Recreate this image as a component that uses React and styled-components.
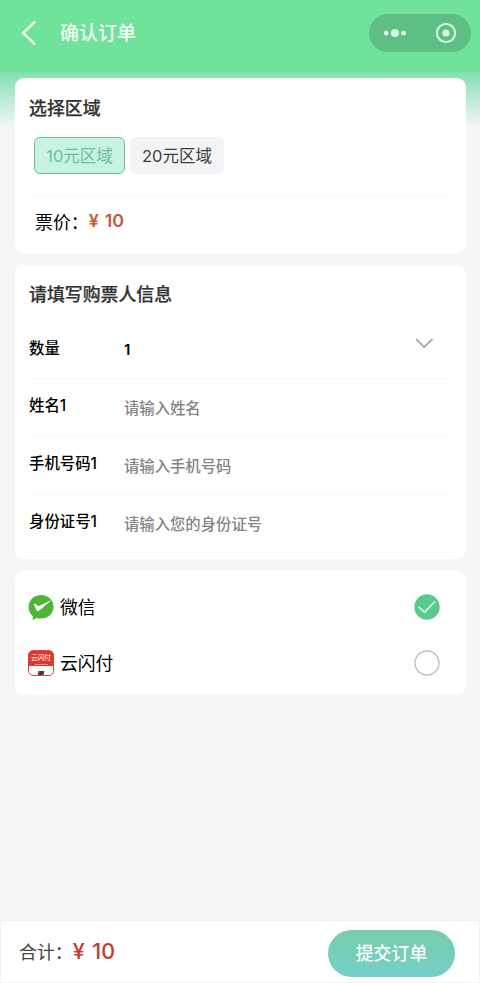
import React, { useState } from "react";
import styled, { createGlobalStyle } from "styled-components";

const GlobalStyle = createGlobalStyle`
  * {
    box-sizing: border-box;
  }

  body {
    margin: 0;
    background: #f7f7f7;
    color: #000;
    font-family: Inter, "Noto Sans CJK SC", sans-serif;
  }

  button,
  input {
    margin: 0;
    padding: 0;
    border: 0;
    background: none;
    font-family: inherit;
  }
`;

const Page = styled.div`
  display: flex;
  flex-direction: column;
  height: 983px;
  overflow: hidden;
`;

const Header = styled.header`
  display: flex;
  align-items: center;
  flex-shrink: 0;
  height: 72px;
  padding: 0 9px 6px 20px;
  background: #70e29c;
`;

const BackButton = styled.button`
  display: flex;
  width: 20px;
  height: 28px;
`;

const HeaderTitle = styled.h1`
  flex: 1;
  margin: 2px 0 0 20px;
  color: #f4fff6;
  font-size: 19px;
  line-height: 28px;
  font-weight: 500;
`;

const Capsule = styled.div`
  display: flex;
  width: 102px;
  height: 38px;
  border-radius: 19px;
  background: #5dbf84;
`;

const Content = styled.main`
  display: flex;
  flex-direction: column;
  flex: 1;
  gap: 12px;
  padding: 6px 14.5px 0;
  background: linear-gradient(#82dfb0, #f7f7f7 56px);
`;

const Card = styled.section`
  height: ${({ $height }) => $height}px;
  padding: ${({ $padding }) => $padding || "0 14.5px"};
  border-radius: 9px;
  background: #fff;
`;

const CardTitle = styled.h2`
  margin: 0;
  color: #333;
  font-size: 17.9px;
  line-height: 26px;
  font-weight: 500;
  -webkit-text-stroke: 0.25px currentColor;
`;

const AreaList = styled.div`
  display: flex;
  gap: 5px;
  height: 59px;
  margin: 15px 0 0 5px;
`;

const AreaButton = styled.button`
  width: ${({ $active }) => ($active ? 91 : 94)}px;
  height: 37px;
  border: 1px solid ${({ $active }) => ($active ? "#72bd98" : "#f3f4f6")};
  border-radius: 6px;
  background: ${({ $active }) => ($active ? "#c7f3e1" : "#f3f4f6")};
  color: ${({ $active }) => ($active ? "#70bd98" : "#3c3c3e")};
  font-size: 16.5px;
  line-height: 24px;
`;

const PriceRow = styled.div`
  display: flex;
  align-items: center;
  height: 48px;
  margin-left: 3px;
  padding-left: 3px;
  border-top: 1px solid #f7f7f7;
  font-size: 17.9px;
`;

const Price = styled.span`
  color: #c15a3e;
  font-size: 17.8px;
  font-weight: 600;
  word-spacing: 1.5px;
`;

const Field = styled.label`
  display: flex;
  height: ${({ $height }) => $height || 58}px;
  padding-top: ${({ $top }) => $top || 14.5}px;
  border-bottom: 1px solid #f8f8f8;
  font-size: 15.4px;
  line-height: 26px;
  font-weight: 500;

  svg {
    margin: -3.5px 17.5px 0 auto;
  }
`;

const FieldName = styled.span`
  width: 95px;
`;

const FieldValue = styled.span`
  padding-top: 1px;
  font-size: 15px;
  font-weight: 600;
`;

const Input = styled.input`
  width: 260px;
  height: 26px;
  margin-top: 2.5px;
  outline: 0;
  font-size: 15.35px;
  font-weight: 500;

  &::placeholder {
    color: #858585;
    opacity: 1;
  }
`;

const PayRow = styled.button`
  display: flex;
  align-items: center;
  gap: 6px;
  width: 100%;
  height: 56px;
  color: #000;
  font-size: 17.8px;
  text-align: left;
`;

const PayName = styled.span`
  flex: 1;
  padding-bottom: 2px;
`;

const Radio = styled.svg`
  margin-right: 12px;
`;

const UnionBadge = styled.span`
  display: flex;
  flex-direction: column;
  align-items: center;
  width: 26px;
  height: 26px;
  padding-top: 2px;
  overflow: hidden;
  border: 1px solid #dc4643;
  border-radius: 5px;
  background: linear-gradient(#e03532 15.5px, #fff 15.5px);
  color: #fff;
  font-size: 6.7px;
  line-height: 10px;
  white-space: nowrap;

  &::after {
    content: "";
    width: 6px;
    height: 4px;
    margin-top: 5.5px;
    background: linear-gradient(90deg, #803c46 33%, #263d55 33% 66%, #28484b 66%);
    transform: skewX(-12deg);
  }
`;

const UnionLine = styled.span`
  width: 13px;
  height: 1px;
  margin-top: 1px;
  background: #ef8d84;
`;

const Footer = styled.footer`
  display: flex;
  align-items: center;
  justify-content: space-between;
  flex-shrink: 0;
  height: 63px;
  padding: 3px 24px 0 18px;
  border: 1px solid #f2f2f2;
  background: #fff;
`;

const Total = styled.div`
  display: flex;
  align-items: center;
  margin-bottom: 5px;
  color: #444;
  font-size: 17.9px;
`;

const TotalPrice = styled.span`
  color: #c5392e;
  font-size: 21.4px;
  font-weight: 500;
  word-spacing: 2px;
`;

const SubmitButton = styled.button`
  width: 127px;
  height: 47px;
  padding-bottom: 3px;
  border-radius: 24px;
  background: linear-gradient(#76cdaa, #76cfc8);
  color: #fff;
  font-size: 17.9px;
  font-weight: 500;
`;

const fields = [
  { id: 1, name: "姓名1", hint: "请输入姓名" },
  { id: 2, name: "手机号码1", hint: "请输入手机号码" },
  { id: 3, name: "身份证号1", hint: "请输入您的身份证号" },
];

const WechatIcon = () => (
  <svg width="26" height="27" viewBox="0 0 26 27">
    <path
      d="M13 1C6 1 .5 6 .5 13c0 4 1.8 7.1 4.4 9.3L4.5 26l4.3-2.1c1.3.5 2.7.7 4.2.7 7 0 12.5-5 12.5-11.8S20 1 13 1z"
      fill="#4eb536"
    />
    <path
      d="M5.8 10c.6-.4 1.1-.3 1.6.1l3 2.2L24 5.8 11.3 16.4c-1.2 1-2.3.9-2.9-.5z"
      fill="#fff"
    />
  </svg>
);

const PayRadio = ({ checked }) => (
  <Radio width="26" height="26" viewBox="0 0 26 26" fill="none">
    {checked ? (
      <>
        <circle cx="13" cy="13" r="12.7" fill="#5bc98c" />
        <path d="M4.5 12.5l6 5.8L21 7.5" stroke="#d8fae6" strokeWidth="1.6" />
      </>
    ) : (
      <circle cx="13" cy="13" r="12" stroke="#bdbdbd" strokeWidth="1.3" />
    )}
  </Radio>
);

const App = () => {
  const [area, setArea] = useState(10);
  const [pay, setPay] = useState("wechat");

  return (
    <>
      <GlobalStyle />
      <Page>
        <Header>
          <BackButton>
            <svg width="20" height="28" viewBox="0 0 20 28" fill="none">
              <path
                d="M14.5 3.2L3.2 14l11.3 10.8"
                stroke="#e8ffed"
                strokeWidth="2.5"
                strokeLinecap="round"
                strokeLinejoin="round"
              />
            </svg>
          </BackButton>
          <HeaderTitle>确认订单</HeaderTitle>
          <Capsule>
            <svg width="102" height="38" viewBox="0 0 102 38" fill="#d9fce4">
              <circle cx="17.2" cy="19.2" r="2.4" />
              <circle cx="26" cy="19" r="4" />
              <circle cx="34.6" cy="19.2" r="2.4" />
              <path d="M51 9v20" stroke="#5bbc82" />
              <circle cx="77" cy="19" r="3.6" />
              <circle cx="77" cy="19" r="9.1" fill="none" stroke="#d9fce4" strokeWidth="2" />
            </svg>
          </Capsule>
        </Header>

        <Content>
          <Card $height={174.5} $padding="18px 14.5px 0">
            <CardTitle>选择区域</CardTitle>
            <AreaList>
              {[10, 20].map((value) => (
                <AreaButton
                  key={value}
                  $active={area === value}
                  onClick={() => setArea(value)}
                >
                  {value}元区域
                </AreaButton>
              ))}
            </AreaList>
            <PriceRow>
              票价：<Price>¥ {area}</Price>
            </PriceRow>
          </Card>

          <Card $height={294} $padding="17.5px 14.5px 0">
            <CardTitle>请填写购票人信息</CardTitle>
            <Field as="div" $height={70.5} $top={27.5}>
              <FieldName>数量</FieldName>
              <FieldValue>1</FieldValue>
              <svg width="20" height="22" viewBox="0 0 20 22" fill="none">
                <path d="M2 7l8.2 8L18.5 7" stroke="#a0a0a0" strokeWidth="1.7" />
              </svg>
            </Field>
            {fields.map(({ id, name, hint }) => (
              <Field key={id}>
                <FieldName>{name}</FieldName>
                <Input placeholder={hint} />
              </Field>
            ))}
          </Card>

          <Card $height={124} $padding="8.5px 13.5px 0">
            <PayRow onClick={() => setPay("wechat")}>
              <WechatIcon />
              <PayName>微信</PayName>
              <PayRadio checked={pay === "wechat"} />
            </PayRow>
            <PayRow onClick={() => setPay("union")}>
              <UnionBadge>
                云闪付
                <UnionLine />
              </UnionBadge>
              <PayName>云闪付</PayName>
              <PayRadio checked={pay === "union"} />
            </PayRow>
          </Card>
        </Content>

        <Footer>
          <Total>
            合计：<TotalPrice>¥ {area}</TotalPrice>
          </Total>
          <SubmitButton>提交订单</SubmitButton>
        </Footer>
      </Page>
    </>
  );
};

export default App;
